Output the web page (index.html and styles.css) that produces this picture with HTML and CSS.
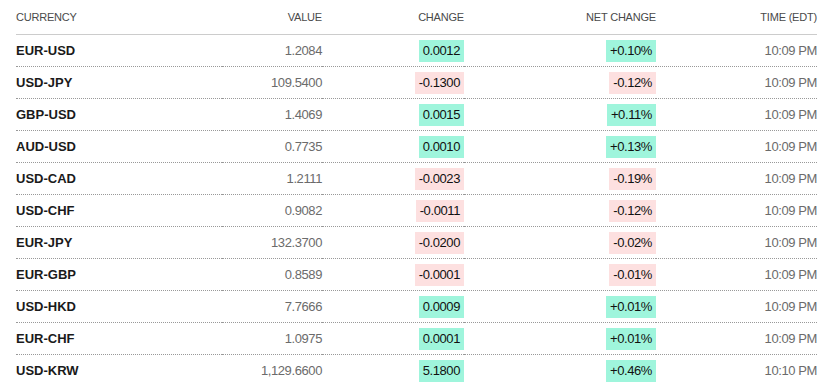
FILE: index.html
```html
<!DOCTYPE html>
<html lang="en">
<head>
    <meta charset="UTF-8">
    <title>Currencies</title>
    <link rel="stylesheet" href="styles.css">
</head>
<body>
    <div class="wrap">
        <table class="quotes">
            <colgroup>
                <col class="c-name">
                <col class="c-value">
                <col class="c-change">
                <col class="c-net">
                <col class="c-time">
            </colgroup>
            <thead>
                <tr>
                    <th class="left">CURRENCY</th>
                    <th>VALUE</th>
                    <th>CHANGE</th>
                    <th>NET CHANGE</th>
                    <th>TIME (EDT)</th>
                </tr>
            </thead>
            <tbody>
                <tr><td class="name">EUR-USD</td><td class="val">1.2084</td><td><span class="pill up">0.0012</span></td><td><span class="pill up">+0.10%</span></td><td class="val">10:09 PM</td></tr>
                <tr><td class="name">USD-JPY</td><td class="val">109.5400</td><td><span class="pill down">-0.1300</span></td><td><span class="pill down">-0.12%</span></td><td class="val">10:09 PM</td></tr>
                <tr><td class="name">GBP-USD</td><td class="val">1.4069</td><td><span class="pill up">0.0015</span></td><td><span class="pill up">+0.11%</span></td><td class="val">10:09 PM</td></tr>
                <tr><td class="name">AUD-USD</td><td class="val">0.7735</td><td><span class="pill up">0.0010</span></td><td><span class="pill up">+0.13%</span></td><td class="val">10:09 PM</td></tr>
                <tr><td class="name">USD-CAD</td><td class="val">1.2111</td><td><span class="pill down">-0.0023</span></td><td><span class="pill down">-0.19%</span></td><td class="val">10:09 PM</td></tr>
                <tr><td class="name">USD-CHF</td><td class="val">0.9082</td><td><span class="pill down">-0.0011</span></td><td><span class="pill down">-0.12%</span></td><td class="val">10:09 PM</td></tr>
                <tr><td class="name">EUR-JPY</td><td class="val">132.3700</td><td><span class="pill down">-0.0200</span></td><td><span class="pill down">-0.02%</span></td><td class="val">10:09 PM</td></tr>
                <tr><td class="name">EUR-GBP</td><td class="val">0.8589</td><td><span class="pill down">-0.0001</span></td><td><span class="pill down">-0.01%</span></td><td class="val">10:09 PM</td></tr>
                <tr><td class="name">USD-HKD</td><td class="val">7.7666</td><td><span class="pill up">0.0009</span></td><td><span class="pill up">+0.01%</span></td><td class="val">10:09 PM</td></tr>
                <tr><td class="name">EUR-CHF</td><td class="val">1.0975</td><td><span class="pill up">0.0001</span></td><td><span class="pill up">+0.01%</span></td><td class="val">10:09 PM</td></tr>
                <tr><td class="name">USD-KRW</td><td class="val">1,129.6600</td><td><span class="pill up">5.1800</span></td><td><span class="pill up">+0.46%</span></td><td class="val">10:10 PM</td></tr>
            </tbody>
        </table>
    </div>
</body>
</html>
```

FILE: styles.css
```css
html, body{
    margin : 0;
    padding : 0;
    background : white;
}
.wrap{
    padding : 0 17px 0 16px;
    font-family: 'Liberation Sans', Arial, sans-serif;
}
.quotes{
    width : 100%;
    border-collapse: collapse;
    table-layout: fixed;
}
.c-name{ width : 206px; }
.c-value{ width : 100px; }
.c-change{ width : 142px; }
.c-net{ width : 192px; }
.c-time{ width : 161px; }

.quotes th{
    height : 34px;
    padding : 0;
    font-size : 11px;
    font-weight: normal;
    color : #4a4a4a;
    text-align: right;
    letter-spacing: -0.2px;
    border-bottom : 1px solid #ccc;
    vertical-align: middle;
}
.quotes th.left{
    text-align: left;
}
.quotes td{
    height : 31px;
    padding : 0;
    font-size : 13px;
    text-align: right;
    border-bottom : 1px dotted #999;
    vertical-align: middle;
    letter-spacing: -0.4px;
}
.quotes td.name{
    text-align: left;
    font-weight: bold;
    color : #1a1a1a;
    letter-spacing: 0;
}
.quotes td.val{
    color : #6b6b6b;
}
.pill{
    display : inline-block;
    padding : 3px 4px;
    line-height: 16px;
    color : #111;
}
.pill.up{
    background : #9ff5dc;
}
.pill.down{
    background : #fde0e0;
}
```
